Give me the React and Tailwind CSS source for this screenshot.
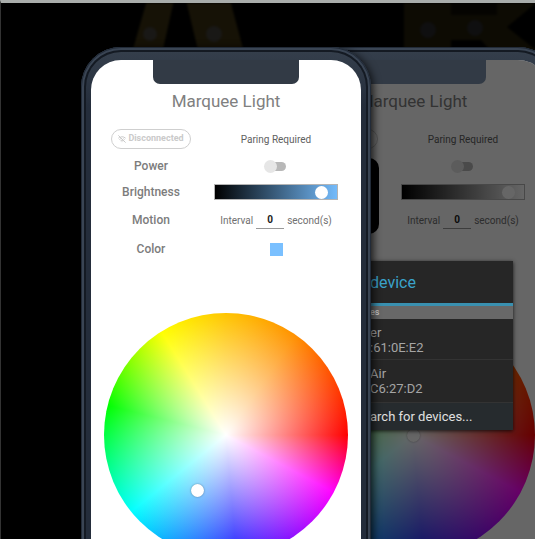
import React from "react";
import { WifiOff } from "lucide-react";

function Backdrop() {
  return (
    <svg className="absolute left-0 top-0 h-[60px] w-[535px] blur-[1px]" viewBox="0 3 535 60" aria-hidden="true">
      <path d="M146 0H173L159 63H128Z" fill="#161206" />
      <path d="M185 0H229L246 63H200Z" fill="#161206" />
      <path d="M403 0H535V3L506 27L535 50V63H500L480 40H450V63H403Z" fill="#0d0b03" />
      <path d="M450 0H496V15H450Z" fill="#050401" />
      <circle cx="149" cy="34" r="7" fill="#191816" />
      <circle cx="213" cy="34" r="8" fill="#191816" />
      <circle cx="427" cy="30" r="8" fill="#0f0f10" />
      <circle cx="474" cy="28" r="8" fill="#0f0f10" />
    </svg>
  );
}

function Label({ htmlFor, covered, children }) {
  return (
    <label
      htmlFor={htmlFor}
      className={"text-center text-[12px] font-medium leading-4 text-[#7c7c7c] " + (covered ? "invisible" : "")}
    >
      {children}
    </label>
  );
}

// covered: the left column lies behind the phone in front
function Controls({ id, slider, swatch, covered }) {
  return (
    <div className="mt-3 grid grid-cols-[80px_1fr] grid-rows-[28px_26px_26px_30px_28px] items-center gap-x-[23px] pl-5 pr-[23px]">
      <button className="flex h-5 items-center justify-center gap-0.5 rounded-full border border-[#cfcfcf] text-[9px] font-bold text-[#cacaca]">
        <WifiOff size={8} strokeWidth={3} />
        <span className={covered ? "invisible" : ""}>Disconnected</span>
      </button>
      <p className="text-center text-[10px] text-[#606060]">Paring Required</p>

      <Label htmlFor={id + "-power"} covered={covered}>Power</Label>
      <input
        id={id + "-power"}
        type="checkbox"
        role="switch"
        className="relative h-[9px] w-5 appearance-none justify-self-center rounded-full bg-[#b8b8b8] before:absolute before:-left-0.5 before:-top-0.5 before:size-[13px] before:rounded-full before:bg-[#e6e6e6]"
      />

      <Label htmlFor={id + "-brightness"} covered={covered}>Brightness</Label>
      <input
        id={id + "-brightness"}
        type="range"
        defaultValue="92"
        className={
          "h-4 w-full appearance-none border border-[#b4b4b4] bg-linear-to-r/srgb [&::-webkit-slider-thumb]:size-[13px] [&::-webkit-slider-thumb]:appearance-none [&::-webkit-slider-thumb]:rounded-full [&::-webkit-slider-thumb]:bg-white " +
          slider
        }
      />

      <Label htmlFor={id + "-motion"} covered={covered}>Motion</Label>
      <div className="flex items-center justify-center gap-[3px] text-[10px] text-[#707070]">
        <span>Interval</span>
        <input
          id={id + "-motion"}
          type="text"
          defaultValue="0"
          className="h-[17px] w-7 border-b border-[#999] text-center text-[10px] font-bold text-[#222]"
        />
        <span>second(s)</span>
      </div>

      <Label htmlFor={id + "-color"} covered={covered}>Color</Label>
      <button id={id + "-color"} aria-label="Color" className={"size-[13px] justify-self-center " + swatch} />
    </div>
  );
}

function ColorWheel({ knob }) {
  return (
    <div className="relative mx-auto mt-[50px] size-[244px] rounded-full bg-[radial-gradient(closest-side,#fff,#fff0),conic-gradient(from_90deg,#f00_0deg,#f0f_28deg,#22f_85deg,#0ff_141deg,#0f0_194deg,#ff0_238deg,#ffc400_270deg,#ff9000_305deg,#f00_360deg)]">
      <span className={"absolute size-[13px] rounded-full bg-white shadow-[0_0_2px_#0006] " + knob} />
    </div>
  );
}

function Phone({ className, children, overlay }) {
  return (
    <section
      className={
        "relative h-[620px] w-[290px] shrink-0 rounded-[40px] bg-linear-to-b from-[#36404d] from-0% via-[#242d3b] via-[60px] to-[#242d3b] px-[10px] pt-[13px] " +
        className
      }
    >
      <div className="pointer-events-none absolute inset-0 rounded-[40px] shadow-[inset_0_0_0_1px_#222b38,inset_0_0_0_3px_#3a4554,inset_0_0_0_5px_#141a23]" />
      <div className="relative h-full overflow-hidden rounded-[30px] bg-white">
        {children}
        {overlay}
        <div className="absolute left-1/2 top-0 h-6 w-[146px] -translate-x-1/2 rounded-b-[7px] bg-[#323a45]" />
      </div>
    </section>
  );
}

function Title() {
  return <h1 className="mt-[29px] text-center text-[17px] leading-6 text-[#808080]">Marquee Light</h1>;
}

function DeviceDialog() {
  return (
    <div role="dialog" className="absolute inset-x-[35px] top-[201px] bg-[#262626] text-[#a5a5a5] shadow-[0_1px_4px_#000c]">
      <h2 className="border-b-[3px] border-[#3990b0] pl-[57px] pt-0.5 text-[16px] leading-10 text-[#3aa3cb]">device</h2>
      <p className="bg-[#686868] pl-[57px] text-[9px] font-medium leading-[13px] text-[#c8c8c8]">es</p>
      <ul className="text-[13px] leading-[15px]">
        <li className="border-b border-[#333] pb-1 pl-[57px] pt-1.5">
          er
          <br />
          :61:0E:E2
        </li>
        <li className="border-b border-[#333] pb-1.5 pl-[57px] pt-1.5">
          Air
          <br />
          C6:27:D2
        </li>
      </ul>
      <button className="block w-full bg-[#262b2e] pl-[57px] text-left text-[13px] leading-[27px] text-[#e0e0e0]">
        arch for devices...
      </button>
    </div>
  );
}

export default function App() {
  return (
    <main className="relative h-screen overflow-hidden border-l border-t-[3px] border-l-[#333] border-t-[#a9adab] bg-black font-['Roboto',sans-serif]">
      <Backdrop />
      <div className="flex pl-20 pt-[44px]">
        <Phone className="z-10 shadow-[2px_2px_8px_#000c]">
          <Title />
          <Controls id="front" slider="from-black to-[#74bbfb]" swatch="bg-[#7ac0ff]" />
          <ColorWheel knob="left-[87px] top-[171px]" />
        </Phone>
        <Phone
          className="-ml-[103px]"
          overlay={
            <>
              <div className="absolute inset-0 bg-black/60" />
              <div className="absolute left-10 top-[98px] h-[76px] w-[61px] rounded-[10px] bg-black" />
              <DeviceDialog />
            </>
          }
        >
          <Title />
          <Controls id="back" slider="from-black to-white" swatch="bg-white" covered />
          <ColorWheel knob="left-[116px] top-[116px]" />
        </Phone>
      </div>
    </main>
  );
}
